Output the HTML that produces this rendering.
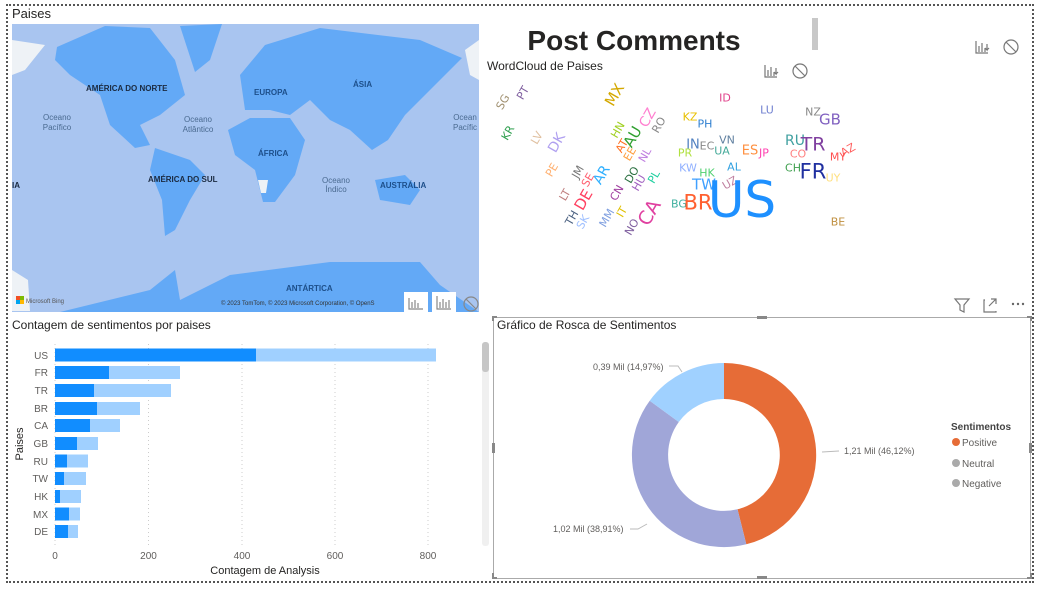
<!DOCTYPE html>
<html><head><meta charset="utf-8">
<style>
*{margin:0;padding:0;box-sizing:border-box}
body{width:1041px;height:592px;background:#fff;position:relative;overflow:hidden;font-family:"Liberation Sans","DejaVu Sans",sans-serif;color:#252423}
.abs{position:absolute}
.t{position:absolute;font-size:12px;color:#252423;white-space:nowrap}
.w{position:absolute;white-space:nowrap;transform:translate(-50%,-50%);font-size:11px;line-height:1;font-family:"DejaVu Sans",sans-serif}
.r{transform:translate(-50%,-50%) rotate(-60deg)}
.lbl{position:absolute;font-size:10px;color:#605e5c;white-space:nowrap}
</style></head><body>
<div class="abs" style="left:6px;top:4px;width:1028px;height:579px;border:2px dotted #555"></div>

<div class="t" style="left:12px;top:6px;font-size:13px">Paises</div>
<svg class="abs" style="left:0;top:0" width="1041" height="592">
<defs><clipPath id="mc"><rect x="12" y="24" width="467" height="288"/></clipPath></defs>
<g clip-path="url(#mc)">
<rect x="12" y="24" width="467" height="288" fill="#a9c5f0"/>
<g fill="#63a9f6">
<polygon points="57,47 105,26 150,28 175,60 185,95 160,115 140,125 150,145 135,148 110,125 100,95 70,75 55,60"/>
<polygon points="180,26 222,24 210,60 195,72"/>
<polygon points="155,148 190,160 205,175 190,200 175,230 165,236 162,200 150,170"/>
<polygon points="240,75 265,45 320,28 420,40 462,58 430,90 405,115 388,140 372,150 350,130 330,120 310,100 290,115 270,110 245,110"/>
<polygon points="228,130 250,118 290,118 305,140 295,175 275,202 263,202 255,170 235,155"/>
<polygon points="375,180 405,175 420,190 410,205 380,200"/>
<polygon points="60,312 150,290 175,270 180,300 230,275 330,262 420,262 440,285 479,312"/>
</g>
<polygon points="12,40 45,45 25,70 12,75" fill="#eef2f6"/>
<polygon points="465,50 479,40 479,80 470,75" fill="#eef2f6"/>
<polygon points="12,270 28,280 30,311 12,311" fill="#eef2f6"/>
<polygon points="258,180 268,180 266,193 261,193" fill="#eef2f6"/>
</g>
<g font-size="8" font-weight="bold" fill="#1a2a40" font-family="Liberation Sans,sans-serif">
<text x="86" y="91">AMÉRICA DO NORTE</text>
<text x="254" y="95" fill="#1d4f8a">EUROPA</text>
<text x="353" y="87" fill="#1d4f8a">ÁSIA</text>
<text x="258" y="156" fill="#1d4f8a">ÁFRICA</text>
<text x="148" y="182">AMÉRICA DO SUL</text>
<text x="380" y="188" fill="#1d4f8a">AUSTRÁLIA</text>
<text x="286" y="291" fill="#1d4f8a">ANTÁRTICA</text>
<text x="12" y="188">IA</text>
</g>
<g font-size="8" fill="#4a6a90" text-anchor="middle" font-family="Liberation Sans,sans-serif">
<text x="57" y="120">Oceano</text><text x="57" y="130">Pacífico</text>
<text x="198" y="122">Oceano</text><text x="198" y="132">Atlântico</text>
<text x="336" y="183">Oceano</text><text x="336" y="192">Índico</text>
<text x="465" y="120">Ocean</text><text x="465" y="130">Pacífic</text>
</g>
<rect x="16" y="296" width="4" height="4" fill="#f25022"/><rect x="20" y="296" width="4" height="4" fill="#7fba00"/><rect x="16" y="300" width="4" height="4" fill="#00a4ef"/><rect x="20" y="300" width="4" height="4" fill="#ffb900"/>
<text x="26" y="303" font-size="6" fill="#555">Microsoft Bing</text>
<text x="221" y="305" font-size="6" fill="#333">© 2023 TomTom, © 2023 Microsoft Corporation, © OpenS</text>
<rect x="404" y="292" width="24" height="20" fill="#fff"/><rect x="432" y="292" width="24" height="20" fill="#fff"/>
<g stroke="#888" fill="none" stroke-width="1.2">
<path d="M409 298v11h14M412 308v-6M415 308v-8M418 308v-5"/>
<path d="M437 296v13h14M440 308v-6M443 308v-9M446 308v-6M449 308v-8"/>
<circle cx="471" cy="304" r="7"/><path d="M466 299l10 10"/>
</g>

<!-- top right -->
<text x="634" y="50" font-size="28" font-weight="bold" fill="#252423" text-anchor="middle" font-family="Liberation Sans,sans-serif">Post Comments</text>
<rect x="812" y="18" width="6" height="32" fill="#c8c8c8"/>
<g stroke="#777" fill="none" stroke-width="1.2">
<path d="M976 41v12h12M979 52v-6M982 52v-9M985 52v-4M987 44v6l-2 -2M987 50l2-2"/>
<circle cx="1011" cy="47" r="7"/><path d="M1006 42l10 10"/>
<path d="M765 65v12h12M768 76v-6M771 76v-9M774 76v-4M776 68v6l-2-2M776 74l2-2"/>
<circle cx="800" cy="71" r="7"/><path d="M795 66l10 10"/>
<path d="M955 299h14l-5 6v7l-4-2v-5z"/>
<path d="M985 300h-1v12h12v-1M989 306l7-7M991 299h5v5"/>
</g>
<g fill="#666"><circle cx="1013" cy="304" r="1.2"/><circle cx="1018" cy="304" r="1.2"/><circle cx="1023" cy="304" r="1.2"/></g>

<!-- bar chart -->
<g stroke="#ccc" stroke-dasharray="1,3">
<path d="M55 344v202M148.5 344v202M242 344v202M335 344v202M428 344v202"/>
</g>
<rect x="482" y="342" width="7" height="204" rx="3" fill="#f0f0f0"/>
<rect x="482" y="342" width="7" height="30" rx="3" fill="#c6c6c6"/>
<g>
<rect x="55" y="348.5" width="381" height="13" fill="#a0d0ff"/><rect x="55" y="348.5" width="201" height="13" fill="#118dff"/>
<rect x="55" y="366" width="125" height="13" fill="#a0d0ff"/><rect x="55" y="366" width="54" height="13" fill="#118dff"/>
<rect x="55" y="384" width="116" height="13" fill="#a0d0ff"/><rect x="55" y="384" width="39" height="13" fill="#118dff"/>
<rect x="55" y="402" width="85" height="13" fill="#a0d0ff"/><rect x="55" y="402" width="42" height="13" fill="#118dff"/>
<rect x="55" y="419" width="65" height="13" fill="#a0d0ff"/><rect x="55" y="419" width="35" height="13" fill="#118dff"/>
<rect x="55" y="437" width="43" height="13" fill="#a0d0ff"/><rect x="55" y="437" width="22" height="13" fill="#118dff"/>
<rect x="55" y="454.5" width="33" height="13" fill="#a0d0ff"/><rect x="55" y="454.5" width="12" height="13" fill="#118dff"/>
<rect x="55" y="472" width="31" height="13" fill="#a0d0ff"/><rect x="55" y="472" width="9" height="13" fill="#118dff"/>
<rect x="55" y="490" width="26" height="13" fill="#a0d0ff"/><rect x="55" y="490" width="5" height="13" fill="#118dff"/>
<rect x="55" y="507.5" width="25" height="13" fill="#a0d0ff"/><rect x="55" y="507.5" width="14" height="13" fill="#118dff"/>
<rect x="55" y="525" width="23" height="13" fill="#a0d0ff"/><rect x="55" y="525" width="13" height="13" fill="#118dff"/>
</g>
<g font-size="10" fill="#605e5c" text-anchor="end" font-family="Liberation Sans,sans-serif">
<text x="48" y="359">US</text><text x="48" y="376">FR</text><text x="48" y="394">TR</text><text x="48" y="412">BR</text><text x="48" y="429">CA</text><text x="48" y="447">GB</text><text x="48" y="465">RU</text><text x="48" y="482">TW</text><text x="48" y="500">HK</text><text x="48" y="518">MX</text><text x="48" y="535">DE</text>
</g>
<g font-size="10" fill="#605e5c" text-anchor="middle" font-family="Liberation Sans,sans-serif">
<text x="55" y="559">0</text><text x="148.5" y="559">200</text><text x="242" y="559">400</text><text x="335" y="559">600</text><text x="428" y="559">800</text>
</g>
<text x="265" y="574" font-size="11" fill="#252423" text-anchor="middle" font-family="Liberation Sans,sans-serif">Contagem de Analysis</text>
<text transform="translate(23,444) rotate(-90)" font-size="11" fill="#252423" text-anchor="middle" font-family="Liberation Sans,sans-serif">Paises</text>

<!-- donut -->
<rect x="493.5" y="317.5" width="537" height="261" fill="none" stroke="#aaa"/>
<g fill="#888"><rect x="492" y="316" width="5" height="2"/><rect x="492" y="316" width="2" height="5"/><rect x="1027" y="316" width="5" height="2"/><rect x="1030" y="316" width="2" height="5"/><rect x="492" y="577" width="5" height="2"/><rect x="492" y="573" width="2" height="5"/><rect x="1027" y="577" width="5" height="2"/><rect x="1030" y="573" width="2" height="5"/><rect x="757" y="316" width="10" height="3"/><rect x="757" y="576" width="10" height="3"/><rect x="492" y="443" width="3" height="10"/><rect x="1029" y="443" width="3" height="10"/></g>
<path d="M724 363A92 92 0 0 1 746.3 544.3L737.5 509.3A56 56 0 0 0 724 399Z" fill="#e66c37"/>
<path d="M746.3 544.3A92 92 0 0 1 649.7 400.7L678.8 422A56 56 0 0 0 737.5 509.3Z" fill="#a0a6d8"/>
<path d="M649.7 400.7A92 92 0 0 1 724 363L724 399A56 56 0 0 0 678.8 422Z" fill="#a0d1ff"/>
<g stroke="#bbb" fill="none"><path d="M669 366h9l4 6"/><path d="M822 452l17-1"/><path d="M630 529h8l9-5"/></g>
<g font-size="9" fill="#605e5c" font-family="Liberation Sans,sans-serif">
<text x="593" y="370">0,39 Mil (14,97%)</text>
<text x="844" y="454">1,21 Mil (46,12%)</text>
<text x="553" y="532">1,02 Mil (38,91%)</text>
</g>
<text x="951" y="430" font-size="10" font-weight="bold" fill="#444" font-family="Liberation Sans,sans-serif">Sentimentos</text>
<circle cx="956" cy="442" r="4" fill="#e66c37"/><circle cx="956" cy="463" r="4" fill="#aaa"/><circle cx="956" cy="483" r="4" fill="#aaa"/>
<g font-size="10" fill="#605e5c" font-family="Liberation Sans,sans-serif"><text x="962" y="446">Positive</text><text x="962" y="467">Neutral</text><text x="962" y="487">Negative</text></g>
</svg>

<div class="t" style="left:487px;top:59px;font-size:12px">WordCloud de Paises</div>
<div class="t" style="left:12px;top:318px;font-size:12px">Contagem de sentimentos por paises</div>
<div class="t" style="left:497px;top:318px;font-size:12px">Gráfico de Rosca de Sentimentos</div>

<div class="w r" style="left:503px;top:102px;color:#a09070">SG</div>
<div class="w r" style="left:523px;top:93px;color:#8060a0">PT</div>
<div class="w r" style="left:615px;top:95px;color:#d4a800;font-size:15px">MX</div>
<div class="w" style="left:725px;top:98px;color:#e0408a">ID</div>
<div class="w" style="left:767px;top:110px;color:#7080d0">LU</div>
<div class="w" style="left:813px;top:112px;color:#888">NZ</div>
<div class="w" style="left:830px;top:120px;color:#8060c0;font-size:15px">GB</div>
<div class="w r" style="left:508px;top:133px;color:#30a050">KR</div>
<div class="w r" style="left:537px;top:138px;color:#e0c0a0">LV</div>
<div class="w r" style="left:557px;top:143px;color:#b0a0f0;font-size:14px">DK</div>
<div class="w r" style="left:618px;top:130px;color:#a0d020">HN</div>
<div class="w r" style="left:622px;top:146px;color:#ff7020">AT</div>
<div class="w r" style="left:633px;top:137px;color:#30a030;font-size:15px">AU</div>
<div class="w r" style="left:630px;top:154px;color:#ffa040">EE</div>
<div class="w r" style="left:648px;top:118px;color:#ff80d0;font-size:14px">CZ</div>
<div class="w r" style="left:659px;top:125px;color:#888">RO</div>
<div class="w r" style="left:645px;top:155px;color:#c080e0">NL</div>
<div class="w" style="left:690px;top:117px;color:#e8c000">KZ</div>
<div class="w" style="left:705px;top:124px;color:#3080d0">PH</div>
<div class="w" style="left:693px;top:145px;color:#5080c0;font-size:13px">IN</div>
<div class="w" style="left:707px;top:146px;color:#888">EC</div>
<div class="w" style="left:727px;top:140px;color:#6080a0">VN</div>
<div class="w" style="left:722px;top:151px;color:#4a9">UA</div>
<div class="w" style="left:685px;top:153px;color:#b0e040">PR</div>
<div class="w" style="left:750px;top:151px;color:#ff9040;font-size:13px">ES</div>
<div class="w" style="left:764px;top:153px;color:#ff40b0">JP</div>
<div class="w" style="left:795px;top:141px;color:#40a0a0;font-size:14px">RU</div>
<div class="w" style="left:813px;top:145px;color:#8040a0;font-size:19px">TR</div>
<div class="w" style="left:798px;top:154px;color:#ff8080">CO</div>
<div class="w" style="left:848px;top:150px;color:#ff6060;transform:translate(-50%,-50%) rotate(-30deg)">AZ</div>
<div class="w" style="left:838px;top:157px;color:#ff5050">MY</div>
<div class="w" style="left:688px;top:168px;color:#90b0ff">KW</div>
<div class="w" style="left:707px;top:173px;color:#50d070">HK</div>
<div class="w" style="left:734px;top:167px;color:#30a0e0">AL</div>
<div class="w" style="left:793px;top:168px;color:#40a050">CH</div>
<div class="w" style="left:813px;top:172px;color:#2030a0;font-size:21px">FR</div>
<div class="w" style="left:833px;top:178px;color:#ffe080">UY</div>
<div class="w r" style="left:552px;top:170px;color:#ffb070">PE</div>
<div class="w r" style="left:578px;top:172px;color:#777">JM</div>
<div class="w r" style="left:588px;top:180px;color:#ff6070">SE</div>
<div class="w r" style="left:602px;top:175px;color:#30b0ff;font-size:14px">AR</div>
<div class="w r" style="left:632px;top:175px;color:#2a7040">DO</div>
<div class="w r" style="left:639px;top:183px;color:#a060c0">HU</div>
<div class="w r" style="left:654px;top:177px;color:#20d0a0">PL</div>
<div class="w" style="left:704px;top:185px;color:#40a0ff;font-size:15px">TW</div>
<div class="w" style="left:730px;top:183px;color:#c080a0;transform:translate(-50%,-50%) rotate(-30deg)">UZ</div>
<div class="w r" style="left:565px;top:195px;color:#c08080">LT</div>
<div class="w r" style="left:584px;top:200px;color:#ff4060;font-size:15px">DE</div>
<div class="w r" style="left:617px;top:193px;color:#a040a0">CN</div>
<div class="w" style="left:679px;top:204px;color:#40b0a0">BG</div>
<div class="w" style="left:698px;top:203px;color:#ff6030;font-size:21px">BR</div>
<div class="w" style="left:742px;top:200px;color:#1e90ff;font-size:50px">US</div>
<div class="w r" style="left:572px;top:218px;color:#4a6080">TH</div>
<div class="w r" style="left:583px;top:222px;color:#a0c0ff">SK</div>
<div class="w r" style="left:607px;top:218px;color:#80a0e0">MM</div>
<div class="w r" style="left:622px;top:212px;color:#e0c000">IT</div>
<div class="w r" style="left:632px;top:227px;color:#8060a0">NO</div>
<div class="w r" style="left:650px;top:213px;color:#e040a0;font-size:19px">CA</div>
<div class="w" style="left:838px;top:222px;color:#c09040">BE</div>
</body></html>
